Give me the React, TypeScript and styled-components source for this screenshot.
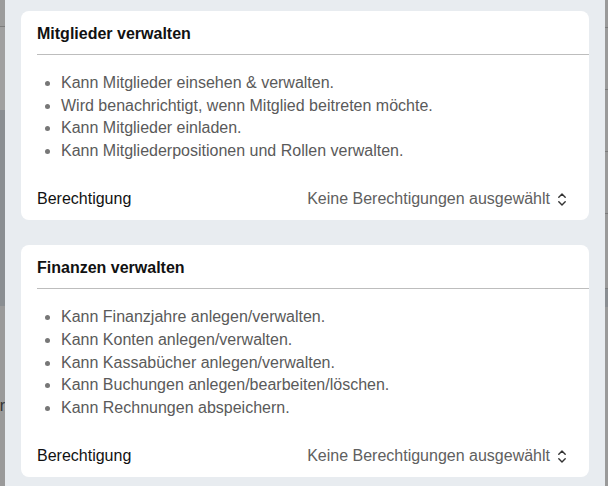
import React from "react";
import styled, { createGlobalStyle } from "styled-components";

const Global = createGlobalStyle`
  html, body { margin: 0; padding: 0; height: 100%; }
  body {
    font-family: "Liberation Sans", Arial, sans-serif;
    -webkit-font-smoothing: antialiased;
    background: #9b9b9b;
    overflow: hidden;
  }
`;

const Screen = styled.div`
  display: flex;
  width: 608px;
  height: 486px;
  overflow: hidden;
`;

const Backdrop = styled.div<{ $w: number }>`
  width: ${(p) => p.$w}px;
  flex: none;
  display: flex;
  flex-direction: column;
  background: #9a9a9a;
  overflow: hidden;
`;

const BackdropBand = styled.div<{ $h: number; $bg: string; $line?: boolean }>`
  height: ${(p) => p.$h}px;
  flex: none;
  background: ${(p) => p.$bg};
  border-bottom: ${(p) => (p.$line ? "1px solid #7c7c7c" : "none")};
  box-sizing: border-box;
  display: flex;
  align-items: flex-end;
  justify-content: flex-end;
  font-size: 16px;
  color: #333;
  line-height: 1;
`;

const Sheet = styled.div`
  flex: 1;
  background: #e8ecf0;
  padding: 11px 16px;
  display: flex;
  flex-direction: column;
  gap: 25px;
  box-sizing: border-box;
`;

const Card = styled.section`
  background: #ffffff;
  border-radius: 8px;
  padding-left: 16px;
  display: flex;
  flex-direction: column;
`;

const Header = styled.div`
  padding: 13px 0 10px;
  border-bottom: 1px solid #bdbdbd;
`;

const Title = styled.h2`
  margin: 0;
  font-size: 16px;
  line-height: 20px;
  font-weight: 700;
  color: #111;
`;

const List = styled.ul`
  margin: 0;
  padding: 17px 16px 0 24px;
  list-style: disc;
  color: #5a5a5a;
  font-size: 16px;
  line-height: 22.6px;
  li::marker { color: #777; }
`;

const Row = styled.div`
  display: flex;
  align-items: center;
  justify-content: space-between;
  padding: 0 23px 0 0;
  height: 42px;
  margin-top: 16px;
`;

const Label = styled.span`
  font-size: 16px;
  color: #111;
`;

const Select = styled.button`
  display: flex;
  align-items: center;
  gap: 8px;
  border: none;
  background: none;
  padding: 0;
  font: inherit;
  font-size: 16px;
  color: #606060;
  cursor: pointer;
`;

const UpDown = () => (
  <svg width="8" height="13" viewBox="0 0 8 13" fill="none" stroke="#333" strokeWidth="1.4" strokeLinecap="round" strokeLinejoin="round">
    <path d="M0.8 4.3 L4 1 L7.2 4.3" />
    <path d="M0.8 8.7 L4 12 L7.2 8.7" />
  </svg>
);

const sections = [
  {
    title: "Mitglieder verwalten",
    items: [
      "Kann Mitglieder einsehen & verwalten.",
      "Wird benachrichtigt, wenn Mitglied beitreten möchte.",
      "Kann Mitglieder einladen.",
      "Kann Mitgliederpositionen und Rollen verwalten.",
    ],
  },
  {
    title: "Finanzen verwalten",
    items: [
      "Kann Finanzjahre anlegen/verwalten.",
      "Kann Konten anlegen/verwalten.",
      "Kann Kassabücher anlegen/verwalten.",
      "Kann Buchungen anlegen/bearbeiten/löschen.",
      "Kann Rechnungen abspeichern.",
    ],
  },
];

export default function App() {
  return (
    <>
      <Global />
      <Screen>
        <Backdrop $w={5}>
          <BackdropBand $h={27} $bg="#9c9c9c" $line />
          <BackdropBand $h={83} $bg="#a0a0a0" />
          <BackdropBand $h={196} $bg="#8a8e92" />
          <BackdropBand $h={108} $bg="#9a9a9a">er</BackdropBand>
        </Backdrop>
        <Sheet>
          {sections.map((s) => (
            <Card key={s.title}>
              <Header>
                <Title>{s.title}</Title>
              </Header>
              <List>
                {s.items.map((i) => (
                  <li key={i}>{i}</li>
                ))}
              </List>
              <Row>
                <Label>Berechtigung</Label>
                <Select>
                  Keine Berechtigungen ausgewählt
                  <UpDown />
                </Select>
              </Row>
            </Card>
          ))}
        </Sheet>
        <Backdrop $w={3}>
          <BackdropBand $h={28} $bg="#9a9a9a" $line />
          <BackdropBand $h={62} $bg="#9a9a9a" $line />
          <BackdropBand $h={62} $bg="#9a9a9a" $line />
          <BackdropBand $h={62} $bg="#9a9a9a" $line />
          <BackdropBand $h={75} $bg="#9a9a9a" $line />
          <BackdropBand $h={18} $bg="#8a8e92" />
        </Backdrop>
      </Screen>
    </>
  );
}
